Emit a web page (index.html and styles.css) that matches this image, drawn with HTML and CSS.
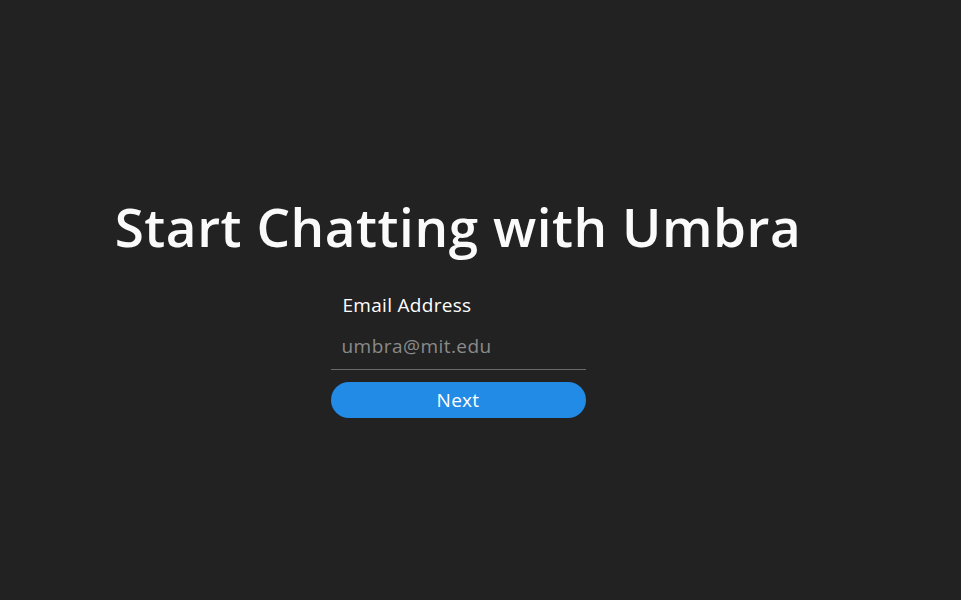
FILE: index.html
```html
<!DOCTYPE html>
<html>
<head>
<meta charset="utf-8">
<link rel="stylesheet" href="styles.css">
</head>
<body>
<main class="page">
  <h1 class="title">Start Chatting with Umbra</h1>
  <form class="form">
    <label class="label" for="email">Email Address</label>
    <input class="input" id="email" type="email" placeholder="umbra@mit.edu">
    <button class="btn" type="button">Next</button>
  </form>
</main>
</body>
</html>
```
FILE: styles.css
```css
html, body {
  margin: 0;
  padding: 0;
  background: #222222;
  height: 100%;
}
.page {
  height: 600px;
  display: flex;
  flex-direction: column;
  align-items: center;
  justify-content: flex-start;
  padding: 195px 45px 0 0;
  box-sizing: border-box;
  font-family: "Open Sans", "DejaVu Sans", sans-serif;
  color: #ffffff;
}
.title {
  margin: 0 0 34px 0;
  font-size: 53px;
  font-weight: 600;
  letter-spacing: 0.55px;
  line-height: 64px;
  color: #fafafa;
}
.form {
  width: 255px;
  display: flex;
  flex-direction: column;
}
.label {
  font-size: 19px;
  letter-spacing: 0.3px;
  padding-left: 12px;
  line-height: 24px;
  color: #ffffff;
}
.input {
  margin-top: 13px;
  background: transparent;
  border: none;
  border-bottom: 1px solid #6a6a6a;
  padding: 4px 11px 11px;
  font-family: inherit;
  font-size: 19px;
  letter-spacing: 0.45px;
  line-height: 24px;
  color: #ffffff;
  outline: none;
}
.input::placeholder {
  color: #8a8a8a;
}
.btn {
  margin-top: 12px;
  height: 36px;
  border: none;
  border-radius: 18px;
  background: #228be6;
  color: #ffffff;
  font-family: inherit;
  font-size: 19px;
  letter-spacing: 0.3px;
}
```
